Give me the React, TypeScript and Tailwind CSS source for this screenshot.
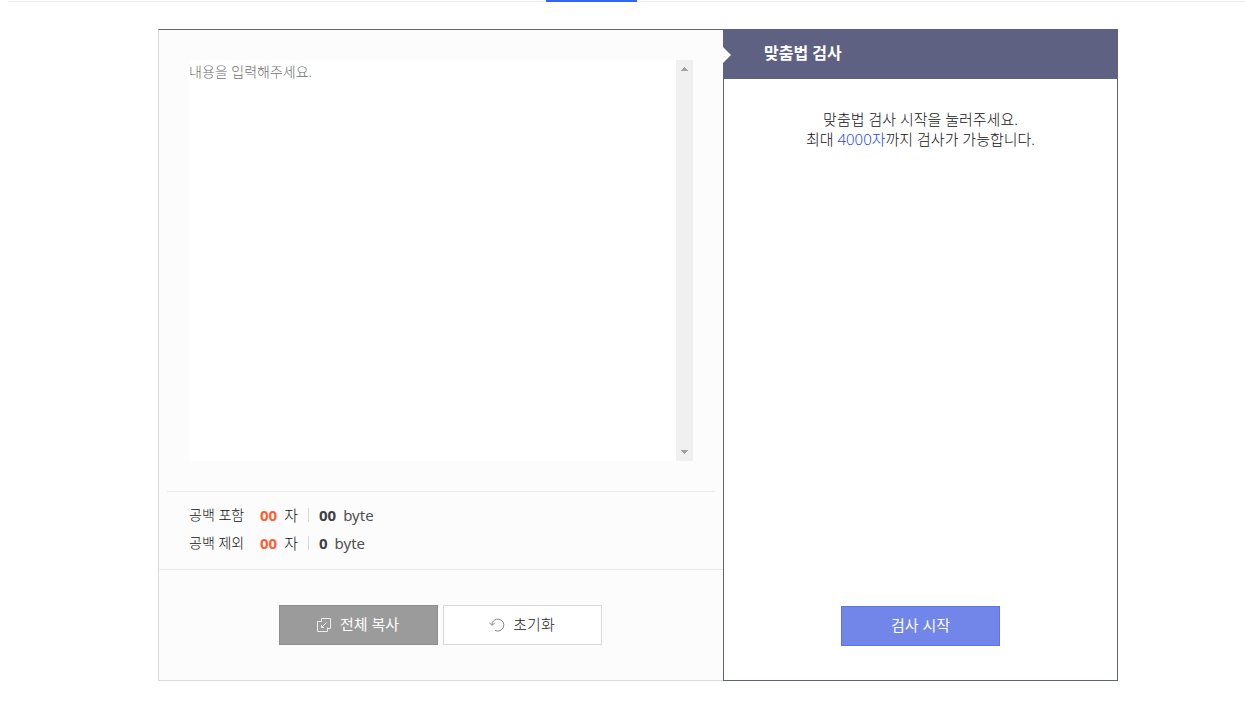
import type { JSX } from "react";
import { useState } from "react";

interface CountRowProps {
  label: string;
  chars: string;
  bytes: string;
}

const COUNTS: CountRowProps[] = [
  { label: "공백 포함", chars: "00", bytes: "00" },
  { label: "공백 제외", chars: "00", bytes: "0" },
];

export default function App(): JSX.Element {
  return (
    <div className="font-['Noto_Sans','Noto_Sans_CJK_KR',sans-serif] text-[15px] leading-5 font-light text-[#111]">
      <TabLine />
      <main className="mt-[27px] flex justify-center pb-7 pl-[31px]">
        <div className="flex min-h-[652px] w-full max-w-[960px]">
          <EditorPanel />
          <ResultPanel />
        </div>
      </main>
    </div>
  );
}

function TabLine(): JSX.Element {
  return (
    <div className="ml-2 flex h-0.5 items-end justify-center">
      <div className="h-px w-[538px] bg-[#ebebeb]" />
      <div className="h-0.5 w-[91px] bg-[#2f66f2]" />
      <div className="h-px flex-1 bg-[#ebebeb]" />
    </div>
  );
}

function EditorPanel(): JSX.Element {
  const [text, setText] = useState("");

  return (
    <section className="flex min-w-0 flex-1 flex-col border-t border-b border-l border-t-[#666] border-b-[#d9d9d9] border-l-[#d9d9d9] bg-[#fcfcfc]">
      <div className="mx-[30px] mt-[30px] flex h-[401px] bg-white">
        <textarea
          aria-label="내용"
          placeholder="내용을 입력해주세요."
          value={text}
          onChange={(e) => setText(e.target.value)}
          className="min-w-0 flex-1 resize-none overflow-hidden pt-0.5 text-sm leading-5 font-light outline-none placeholder:text-[#707070]"
        />
        <ScrollTrack />
      </div>

      <dl className="mx-2 mt-[30px] flex flex-col gap-2 border-t border-[#e9e9e9] px-[22px] pt-[13px] pb-4">
        {COUNTS.map((row) => (
          <CountRow key={row.label} {...row} />
        ))}
      </dl>

      <div className="flex flex-1 items-center justify-center gap-[5px] border-t border-[#e9e9e9] pr-0.5">
        <button
          type="button"
          className="flex h-10 w-[159px] items-center justify-center gap-2 border border-[#8d8d8d] bg-[#9b9b9b] pb-0.5 font-normal text-white"
        >
          <CopyIcon />
          전체 복사
        </button>
        <button
          type="button"
          onClick={() => setText("")}
          className="flex h-10 w-[159px] items-center justify-center gap-2 border border-[#d9d9d9] bg-white pb-0.5 text-[#222]"
        >
          <ResetIcon />
          초기화
        </button>
      </div>
    </section>
  );
}

function CountRow({ label, chars, bytes }: CountRowProps): JSX.Element {
  return (
    <div className="flex h-5 items-center">
      <dt className="w-[71px] text-sm leading-5">{label}</dt>
      <dd className="flex items-center">
        <b className="font-bold text-[#ff5c35]">{chars}</b>
        <span className="ml-[7px]">자</span>
        <span className="mx-2.5 h-3.5 w-px bg-[#d9d9d9]" />
        <b className="font-bold text-[#404040]">{bytes}</b>
        <span className="ml-[7px] font-normal text-[#505050]">byte</span>
      </dd>
    </div>
  );
}

function ResultPanel(): JSX.Element {
  return (
    <section className="flex w-[395px] shrink-0 flex-col border border-[#5e6181] bg-white">
      <header className="relative -ml-px flex h-[49px] items-center bg-[#5e6181] pb-1 pl-[41px]">
        <svg className="absolute top-4 left-0" width="9" height="18" aria-hidden="true">
          <path d="M0 1l8 8-8 8z" fill="#fff" />
        </svg>
        <h2 className="text-base leading-5 font-bold text-white">맞춤법 검사</h2>
      </header>
      <p className="mt-[30px] text-center">
        맞춤법 검사 시작을 눌러주세요.
        <br />
        최대 <span className="text-[#1f48f0]">4000자</span>까지 검사가 가능합니다.
      </p>
      <button
        type="button"
        className="mx-auto mt-auto mb-[34px] h-10 w-[159px] border border-[#5c73ee] bg-[#7186e8] pb-0.5 font-normal text-white"
      >
        검사 시작
      </button>
    </section>
  );
}

function ScrollTrack(): JSX.Element {
  return (
    <div className="flex w-[17px] flex-col items-center justify-between bg-[#f0f0f0] py-[7px]" aria-hidden="true">
      <svg width="7" height="4" shapeRendering="crispEdges" fill="#a3a3a3">
        <path d="M3 0h1v1h1v1h1v1h1v1H0V3h1V2h1V1h1z" />
      </svg>
      <svg width="7" height="4" shapeRendering="crispEdges" fill="#a3a3a3">
        <path d="M0 0h7v1H6v1H5v1H4v1H3V3H2V2H1V1H0z" />
      </svg>
    </div>
  );
}

function CopyIcon(): JSX.Element {
  return (
    <svg className="mt-0.5" width="15" height="15" viewBox="0 0 15 15" fill="none" stroke="#ededed" aria-hidden="true">
      <path d="M4.5 3.5v-3h9v10h-3" />
      <path d="M4.5 3.5h-4v10h10v-4" />
      <path d="M9.5 4.5L4.5 9.5M4.5 7v2.5H7" />
    </svg>
  );
}

function ResetIcon(): JSX.Element {
  return (
    <svg className="mt-0.5" width="16" height="15" viewBox="0 0 16 15" fill="none" stroke="#888" aria-hidden="true">
      <path d="M2.8 6.8a6 6 0 1 1 3.2 5.6" />
      <path d="M.5 4.8L2.8 7.2l3-2" />
    </svg>
  );
}
